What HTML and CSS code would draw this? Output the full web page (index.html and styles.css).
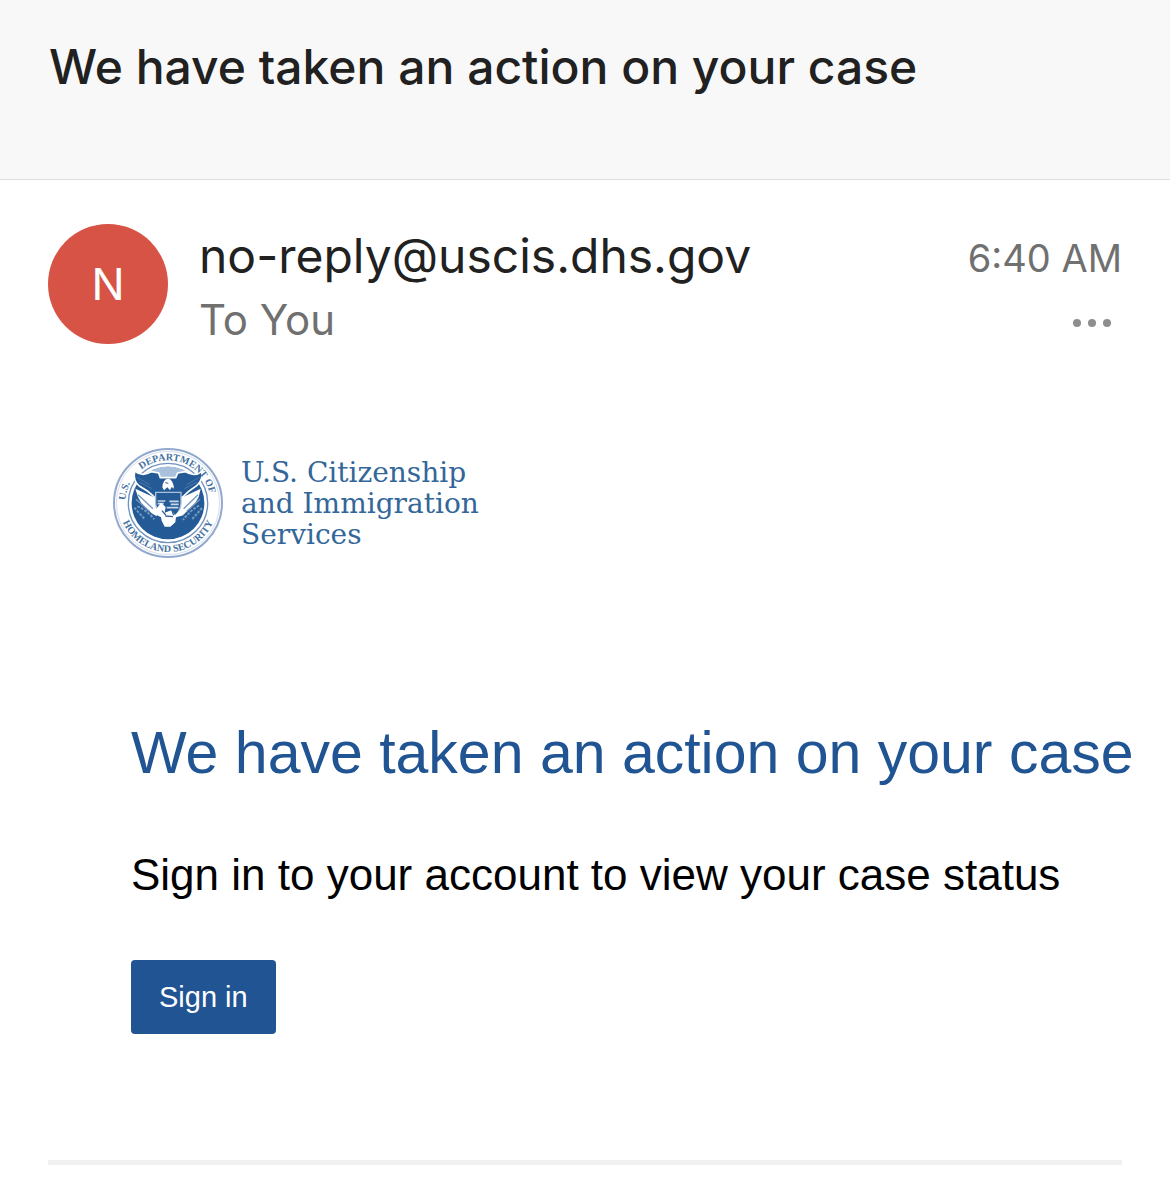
FILE: index.html
```html
<!DOCTYPE html>
<html lang="en">
<head>
<meta charset="UTF-8">
<meta name="viewport" content="width=device-width, initial-scale=1.0">
<title>We have taken an action on your case</title>
<link rel="stylesheet" href="styles.css">
</head>
<body>
<header class="subject">
  <h1>We have taken an action on your case</h1>
</header>

<main class="message">
  <div class="sender">
    <div class="avatar">N</div>
    <div class="who">
      <div class="from">no-reply@uscis.dhs.gov</div>
      <div class="to">To You</div>
    </div>
    <div class="meta">
      <time class="time">6:40 AM</time>
      <button class="more" type="button" aria-label="More actions">
        <svg width="40" height="8" viewBox="0 0 40 8"><circle cx="5" cy="4" r="4"/><circle cx="20" cy="4" r="4"/><circle cx="35" cy="4" r="4"/></svg>
      </button>
    </div>
  </div>

  <div class="logo">
    <svg class="seal" viewBox="0 0 336 336" role="img" aria-label="U.S. Department of Homeland Security seal">
      <defs>
        <path id="arc-top" d="M40 168a128 128 0 0 1 256 0"/>
        <path id="arc-bottom" d="M21 168a147 147 0 0 0 294 0"/>
      </defs>
      <circle cx="168" cy="168" r="162" fill="#fff" stroke="#92a8ce" stroke-width="6"/>
      <circle cx="168" cy="168" r="155" fill="none" stroke="#d5deed" stroke-width="3"/>
      <circle cx="168" cy="168" r="119" fill="none" stroke="#6f93be" stroke-width="4"/>
      <circle cx="168" cy="168" r="109" fill="#245a96"/>
      <path d="M86 96 A109 109 0 0 1 250 96 L214 108 H122Z" fill="#a9c1dc"/>
      <!-- feathers -->
      <path d="M70 125 L142 158 L134 208 L119 199 L103 183 L88 168 L78 150Z" fill="#fff"/>
      <path d="M266 125 L196 158 L204 208 L219 199 L235 183 L250 168 L260 150Z" fill="#fff"/>
      <path d="M78 143l45 42M72 157l40 36M258 143l-43 42M264 157l-40 36" stroke="#7899c1" stroke-width="4"/>
      <!-- wings -->
      <path d="M68 72 Q92 91 118 74 L140 78 L145 92 L191 92 L197 78 L220 74 Q246 91 270 74 Q273 101 254 116 L230 133 L212 150 L195 159 L142 159 L126 149 L106 132 L83 118 Q62 102 68 72Z" fill="#245a96" stroke="#fff" stroke-width="5"/>
      <path d="M75 91l38 22M82 105l38 20M262 91l-38 22M255 105l-38 20" stroke="#4a77aa" stroke-width="3"/>
      <!-- head -->
      <path d="M151 121 Q153 95 169 95 Q183 96 186 125 L179 120 L174 130 L166 121 L156 130Z" fill="#fff"/>
      <path d="M160 107l9 2" stroke="#245a96" stroke-width="3"/>
      <!-- shield -->
      <path d="M131 136H207V170Q204 205 169 217Q135 205 131 170Z" fill="#245a96" stroke="#a9c1dc" stroke-width="4"/>
      <path d="M137 162h23M137 170h18M172 163h28M176 172h24M164 182h35" stroke="#c9d8e9" stroke-width="5"/>
      <!-- talons -->
      <path d="M123 198L147 167L161 180L158 197L178 190L190 205L202 190L216 204L192 211L190 226L175 239H158L149 221L147 211Z" fill="#fff"/>
      <path d="M150 191l12 14M178 185l7 20M160 207l23 2" stroke="#315f98" stroke-width="4"/>
      <path d="M76 178Q104 189 127 217M67 182l30 33M261 176Q235 190 213 219M270 183l-29 33" fill="none" stroke="#7598c0" stroke-width="6" stroke-dasharray="8 4"/>
      <g class="seal-text">
        <text><textPath href="#arc-top" startOffset="8">U.S.</textPath></text>
        <text text-anchor="middle"><textPath href="#arc-top" startOffset="244">DEPARTMENT OF</textPath></text>
        <text text-anchor="middle"><textPath href="#arc-bottom" startOffset="50%">HOMELAND SECURITY</textPath></text>
      </g>
    </svg>
    <div class="agency">U.S. Citizenship<br>and Immigration<br>Services</div>
  </div>

  <section class="content">
    <h2>We have taken an action on your case</h2>
    <p>Sign in to your account to view your case status</p>
    <a class="signin" href="#">Sign in</a>
  </section>
  <hr>
</main>
</body>
</html>
```
FILE: styles.css
```css
* { margin: 0; padding: 0; box-sizing: border-box; }
body {
  font-family: Inter, "Liberation Sans", sans-serif;
  background: #fff;
  color: #212121;
}

.subject {
  background: #f8f8f8;
  border-bottom: 1px solid #dedede;
  padding: 37px 49px 82px;
}
.subject h1 { font-size: 48px; line-height: 60px; font-weight: 500; }

.message { padding: 44px 48px 36px; }

.sender { display: flex; }
.avatar {
  width: 120px; height: 120px;
  flex-shrink: 0;
  background: #d65345; color: #fff;
  border-radius: 50%;
  display: flex; justify-content: center; align-items: center;
  font-size: 44px;
}
.who { flex: 1; margin-left: 31px; }
.from { font-size: 48px; line-height: 64px; }
.to { font-size: 42px; line-height: 64px; color: #707070; }
.meta { display: flex; flex-direction: column; align-items: flex-end; }
.time { font-size: 38px; line-height: 68px; color: #707070; }
.more {
  border: none; background: none;
  padding: 27px 10px 20px; line-height: 0; cursor: pointer;
}
.more svg { fill: #8e8e8e; }

.logo { display: flex; margin: 95px 0 0 64px; }
.seal { width: 112px; height: 112px; flex-shrink: 0; }
.seal-text {
  font-family: "Liberation Serif", serif;
  font-size: 30px; font-weight: bold; fill: #44719f;
}
.agency {
  margin: 10px 0 0 17px;
  font-family: "DejaVu Serif", serif;
  font-size: 28px; line-height: 31px; color: #336699;
}

.content {
  padding: 160px 0 0 83px;
  font-family: "Liberation Sans", Arial, sans-serif;
}
.content h2 {
  font-size: 59px; line-height: 68px; font-weight: normal;
  color: #205493; white-space: nowrap;
}
.content p { margin-top: 62px; font-size: 44px; line-height: 52px; color: #000; }
.signin {
  display: inline-block;
  margin-top: 59px; padding: 20px 28px;
  background: #205493; color: #fff;
  border-radius: 4px;
  font-size: 29px; line-height: 34px; text-decoration: none;
}
hr { margin-top: 126px; border: none; height: 5px; background: #f1f1f1; }
```
